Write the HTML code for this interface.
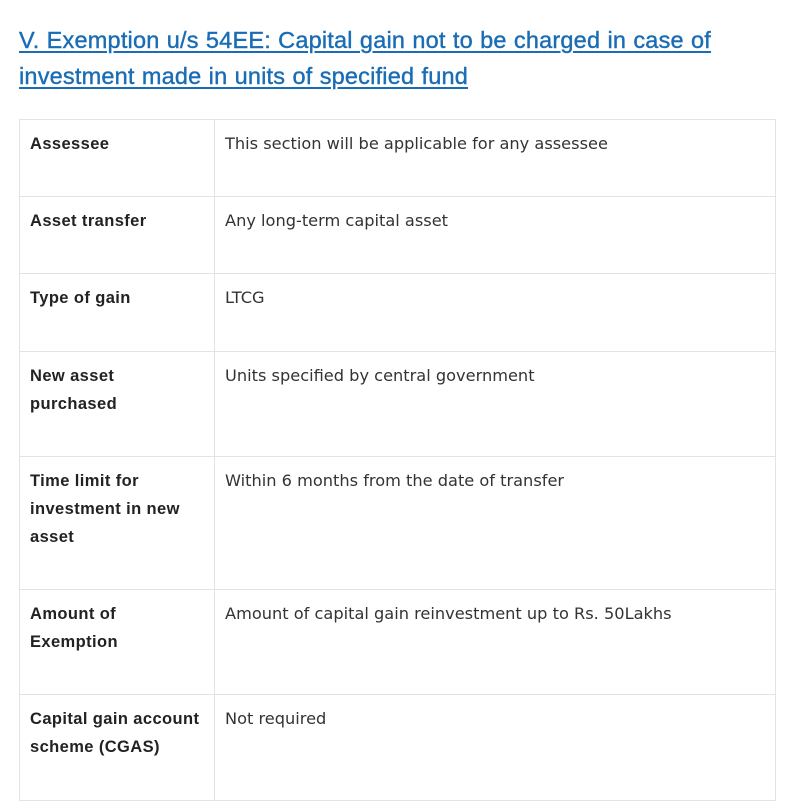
<!DOCTYPE html>
<html><head><style>
body{margin:0;background:#fff;font-family:"Liberation Sans",sans-serif;}
h2{position:absolute;left:19px;top:22px;margin:0;font-size:23.5px;line-height:36px;font-weight:normal;color:#1a6db5;text-decoration:underline;text-underline-offset:3px;letter-spacing:0.2px;word-spacing:0.5px;width:740px;-webkit-text-stroke:0.4px #1a6db5;}
table{position:absolute;left:19px;top:119px;border-collapse:collapse;}
td{border:1px solid #e3e3e3;vertical-align:top;padding:10px 10px;font-size:16.2px;line-height:28px;color:#333;box-sizing:border-box;font-family:"DejaVu Sans",sans-serif;}
td:first-child{width:195px;font-weight:bold;color:#222;font-family:"Liberation Sans",sans-serif;font-size:16.5px;letter-spacing:0.4px;}
td:last-child{width:561px;}
</style></head><body>
<h2>V. Exemption u/s 54EE: Capital gain not to be charged in case of investment made in units of specified fund</h2>
<table>
<tr style="height:77px"><td>Assessee</td><td>This section will be applicable for any assessee</td></tr>
<tr style="height:77px"><td>Asset transfer</td><td>Any long-term capital asset</td></tr>
<tr style="height:78px"><td>Type of gain</td><td>LTCG</td></tr>
<tr style="height:105px"><td>New asset purchased</td><td>Units specified by central government</td></tr>
<tr style="height:133px"><td>Time limit for investment in new asset</td><td>Within 6 months from the date of transfer</td></tr>
<tr style="height:105px"><td>Amount of Exemption</td><td>Amount of capital gain reinvestment up to Rs. 50Lakhs</td></tr>
<tr style="height:106px"><td>Capital gain account scheme (CGAS)</td><td>Not required</td></tr>
</table>
</body></html>
